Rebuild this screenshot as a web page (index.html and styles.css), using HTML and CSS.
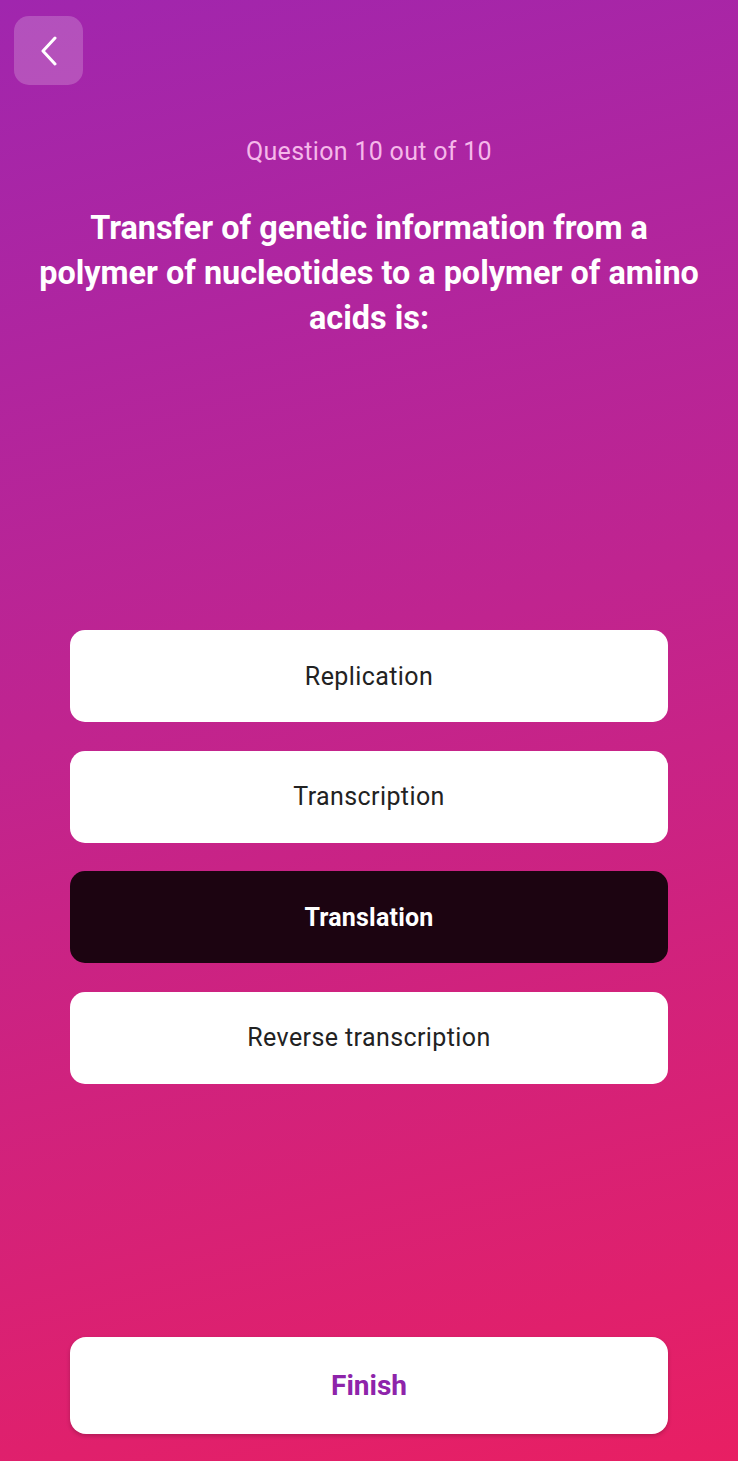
FILE: index.html
```html
<!DOCTYPE html>
<html lang="en">
<head>
<meta charset="utf-8">
<title>Quiz</title>
<link rel="stylesheet" href="styles.css">
</head>
<body>
<div class="screen">
  <header class="topbar">
    <button class="back" aria-label="Back">
      <svg width="20" height="30" viewBox="0 0 20 30"><path d="M16 2 L4 15 L16 28" fill="none" stroke="#fff" stroke-width="3" stroke-linecap="round" stroke-linejoin="round"/></svg>
    </button>
  </header>
  <p class="counter">Question 10 out of 10</p>
  <h1 class="question">Transfer of genetic information from a polymer of nucleotides to a polymer of amino acids is:</h1>
  <div class="options">
    <button class="option">Replication</button>
    <button class="option">Transcription</button>
    <button class="option selected">Translation</button>
    <button class="option">Reverse transcription</button>
  </div>
  <div class="footer">
    <button class="finish">Finish</button>
  </div>
</div>
</body>
</html>
```
FILE: styles.css
```css
* { box-sizing: border-box; }
html, body { margin: 0; padding: 0; }
body {
  font-family: Roboto, "Noto Sans", sans-serif;
}
.screen {
  width: 738px;
  height: 1461px;
  background: linear-gradient(165deg, #a026ae 0%, #c0248f 45%, #e81f63 100%);
  display: flex;
  flex-direction: column;
  overflow: hidden;
}
.topbar {
  padding: 16px 0 0 14px;
}
.back {
  width: 69px;
  height: 69px;
  border: none;
  border-radius: 15px;
  background: rgba(255,255,255,0.2);
  display: flex;
  align-items: center;
  justify-content: center;
  padding: 0;
}
.counter {
  margin: 52px 0 0;
  text-align: center;
  color: #f5b8ea;
  font-size: 25px;
  line-height: 30px;
  letter-spacing: 0.3px;
}
.question {
  margin: 39px 34px 0;
  text-align: center;
  color: #fff;
  font-size: 32.4px;
  font-weight: 700;
  line-height: 45px;
}
.options {
  margin: 289px 70px 0;
  display: flex;
  flex-direction: column;
  gap: 28.5px;
}
.option {
  height: 92px;
  border: none;
  border-radius: 15px;
  background: #fff;
  color: #222;
  font-family: Roboto, "Noto Sans", sans-serif;
  font-size: 25px;
  letter-spacing: 0.4px;
  padding: 0;
}
.option.selected {
  background: #1c0411;
  color: #fff;
  font-weight: 700;
  letter-spacing: 0.2px;
}
.footer {
  margin-top: auto;
  padding: 0 70px 27px;
}
.finish {
  width: 100%;
  height: 97px;
  border: none;
  border-radius: 16px;
  background: #fff;
  color: #8e24aa;
  font-family: Roboto, "Noto Sans", sans-serif;
  font-size: 28px;
  font-weight: 700;
  box-shadow: 0 2px 4px rgba(0,0,0,0.2);
}
```
